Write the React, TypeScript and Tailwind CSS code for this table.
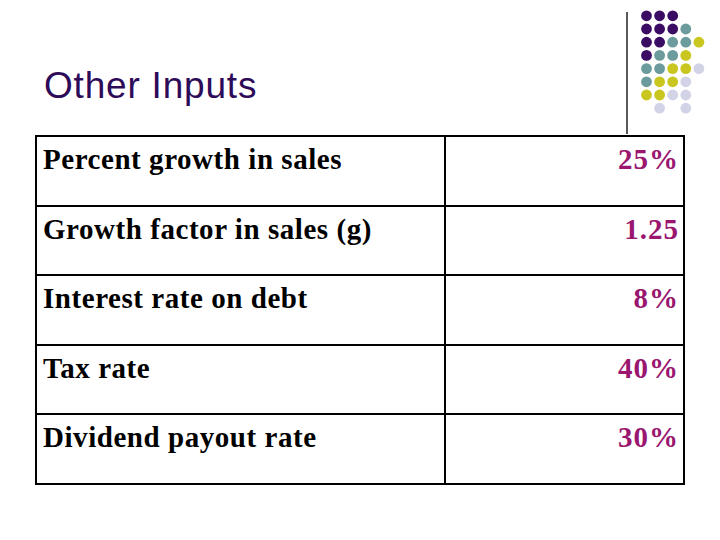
const P = '#3b0c63';
const T = '#6b9b9c';
const Y = '#c9c71f';
const L = '#d3d3e8';

// dot pattern rows, '' = empty
const dotRows = [
  [P, P, P, '', ''],
  [P, P, P, T, ''],
  [P, P, T, T, Y],
  [P, T, T, Y, ''],
  [T, T, Y, Y, L],
  [T, Y, Y, L, ''],
  [Y, Y, L, L, ''],
  ['', L, '', L, ''],
];

const rows = [
  { label: 'Percent growth in sales', value: '25%' },
  { label: 'Growth factor in sales (g)', value: '1.25' },
  { label: 'Interest rate on debt', value: '8%' },
  { label: 'Tax rate', value: '40%' },
  { label: 'Dividend payout rate', value: '30%' },
];

function Dots() {
  return (
    <svg width="90" height="135" viewBox="0 0 90 135">
      <line x1="7" y1="12" x2="7" y2="134" stroke="#000" strokeWidth="1.3" />
      {dotRows.map((row, r) =>
        row.map((c, i) =>
          c ? (
            <circle key={`${r}-${i}`} cx={26.5 + i * 13.1} cy={15.8 + r * 13.2} r="5.4" fill={c} />
          ) : null
        )
      )}
    </svg>
  );
}

export default function App() {
  return (
    <div className="flex h-[540px] w-[720px] flex-col bg-white">
      {/* Header - title and decoration */}
      <div className="flex h-[135px]">
        <h1
          className="pl-[44px] pt-[67px] text-[37px] font-normal leading-none tracking-[0.8px] text-[#2e0b58]"
          style={{ fontFamily: '"Liberation Sans", Arial, sans-serif' }}
        >
          Other Inputs
        </h1>
        <div className="ml-auto mr-[10px]">
          <Dots />
        </div>
      </div>

      {/* Inputs table */}
      <div className="pl-[35px]">
        <table
          className="w-[650px] border-collapse border-2 border-black"
          style={{ fontFamily: '"Liberation Serif", "Times New Roman", serif' }}
        >
          <tbody>
            {rows.map((row) => (
              <tr key={row.label} className="h-[69.6px]">
                <td className="w-[409px] border-2 border-black pl-[6px] pt-[5px] align-top text-[29px] font-bold leading-[35px] tracking-[0.55px] text-black">
                  {row.label}
                </td>
                <td className="border-2 border-black pr-[4px] pt-[5px] text-right align-top text-[29px] font-bold leading-[35px] tracking-[1px] text-[#9a166f]">
                  {row.value}
                </td>
              </tr>
            ))}
          </tbody>
        </table>
      </div>
    </div>
  );
}
